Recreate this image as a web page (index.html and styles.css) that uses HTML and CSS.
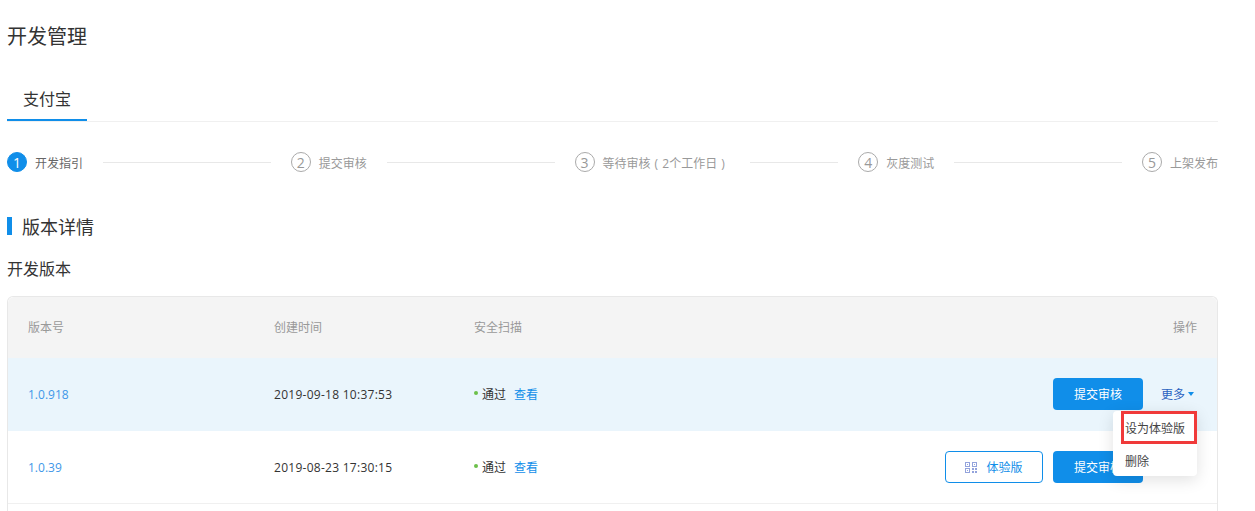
FILE: index.html
```html
<!DOCTYPE html>
<html lang="zh-CN">
<head>
    <meta charset="UTF-8">
    <meta name="viewport" content="width=device-width, initial-scale=1.0">
    <title>开发管理</title>
    <link rel="stylesheet" href="styles.css">
</head>
<body>
    <div class="container">
        <h1 class="page-title">开发管理</h1>

        <div class="tabs">
            <div class="tab active">支付宝</div>
        </div>

        <div class="steps">
            <div class="step current">
                <span class="step-num">1</span>
                <span class="step-text">开发指引</span>
                <span class="step-line"></span>
            </div>
            <div class="step">
                <span class="step-num">2</span>
                <span class="step-text">提交审核</span>
                <span class="step-line"></span>
            </div>
            <div class="step">
                <span class="step-num">3</span>
                <span class="step-text wide">等待审核 ( 2个工作日 )</span>
                <span class="step-line"></span>
            </div>
            <div class="step">
                <span class="step-num">4</span>
                <span class="step-text">灰度测试</span>
                <span class="step-line"></span>
            </div>
            <div class="step last">
                <span class="step-num">5</span>
                <span class="step-text">上架发布</span>
            </div>
        </div>

        <h2 class="section-title">版本详情</h2>
        <h3 class="sub-title">开发版本</h3>

        <div class="table">
            <div class="row head">
                <div class="col-version">版本号</div>
                <div class="col-time">创建时间</div>
                <div class="col-scan">安全扫描</div>
                <div class="col-action">操作</div>
            </div>

            <div class="row highlight">
                <div class="col-version"><a class="link">1.0.918</a></div>
                <div class="col-time"><span class="date">2019-09-18 10:37:53</span></div>
                <div class="col-scan"><span class="dot"></span><span class="pass">通过</span><a class="link-strong">查看</a></div>
                <div class="col-action">
                    <button class="btn primary">提交审核</button>
                    <div class="more">
                        <a class="more-link">更多<span class="caret"></span></a>
                        <div class="menu">
                            <div class="menu-item marked">设为体验版</div>
                            <div class="menu-item">删除</div>
                        </div>
                    </div>
                </div>
            </div>

            <div class="row">
                <div class="col-version"><a class="link">1.0.39</a></div>
                <div class="col-time"><span class="date">2019-08-23 17:30:15</span></div>
                <div class="col-scan"><span class="dot"></span><span class="pass">通过</span><a class="link-strong">查看</a></div>
                <div class="col-action">
                    <button class="btn outline">
                        <svg class="qr" width="12" height="11" viewBox="0 0 12 11"><path fill="#93a3dc" fill-rule="evenodd" d="M0 0h5v5H0zM1 1v3h3V1zM7 0h5v5H7zM8 1v3h3V1zM2 2h1v1H2zM9 2h1v1H9zM0 6h5v5H0zM1 7v3h3V7zM2 8h1v1H2zM7 6h2v2H7zM10 6h2v2h-2zM7 9h2v2H7zM10 9h2v2h-2z"/></svg>
                        体验版
                    </button>
                    <button class="btn primary">提交审核</button>
                    <div class="more-spacer"></div>
                </div>
            </div>

            <div class="row stub"></div>
        </div>
    </div>
</body>
</html>
```

FILE: styles.css
```css
:root {
    --primary-color: #108ee9;
    --text-color: #333333;
    --muted-color: #999999;
    --line-color: #e8e8e8;
}
html, body {
    margin: 0;
    height: 511px;
    overflow: hidden;
    background: #ffffff;
}
body {
    font-family: "Open Sans", "Noto Sans CJK SC", sans-serif;
    font-size: 12px;
    color: var(--text-color);
}
.container {
    width: 1211px;
    margin-left: 7px;
}
.page-title {
    margin: 0;
    padding-top: 23px;
    height: 57px;
    line-height: 28px;
    font-size: 20px;
    font-weight: normal;
    box-sizing: content-box;
}
.tabs {
    display: flex;
    height: 41px;
    border-bottom: 1px solid #f0f0f0;
}
.tab {
    width: 80px;
    height: 41px;
    box-sizing: border-box;
    text-align: center;
    font-size: 16px;
    line-height: 38px;
}
.tab.active {
    border-bottom: 2px solid var(--primary-color);
}

/* steps */
.steps {
    display: flex;
    align-items: center;
    margin-top: 30px;
    height: 20px;
}
.step {
    flex: 1;
    display: flex;
    align-items: center;
    padding-right: 20px;
}
.step.last {
    flex: none;
    padding-right: 0;
}
.step-num {
    width: 20px;
    height: 20px;
    box-sizing: border-box;
    border: 1px solid #aaaaaa;
    border-radius: 50%;
    color: var(--muted-color);
    font-size: 14px;
    line-height: 19px;
    text-align: center;
    margin-right: 8px;
}
.step-text {
    padding-top: 1px;
    color: var(--muted-color);
    white-space: nowrap;
}
.step-text.wide {
    word-spacing: 1px;
    margin-right: 5px;
}
.step-line {
    flex: 1;
    height: 1px;
    margin-left: 20px;
    background: var(--line-color);
}
.step.current .step-num {
    border-color: var(--primary-color);
    background: var(--primary-color);
    color: #ffffff;
}
.step.current .step-text {
    color: #666666;
}

.section-title {
    margin: 45px 0 0;
    height: 18px;
    line-height: 20px;
    padding-left: 10px;
    border-left: 5px solid var(--primary-color);
    font-size: 18px;
    font-weight: normal;
}
.sub-title {
    margin: 22px 0 0;
    height: 24px;
    line-height: 24px;
    font-size: 16px;
    font-weight: normal;
}

/* table */
.table {
    margin-top: 15px;
    border: 1px solid var(--line-color);
    border-radius: 6px 6px 0 0;
    border-bottom: none;
}
.row {
    display: flex;
    align-items: center;
    box-sizing: border-box;
    height: 73px;
    padding: 0 20px;
    border-bottom: 1px solid #f0f0f0;
}
.row.head {
    height: 61px;
    padding-bottom: 2px;
    background: #f4f4f4;
    color: var(--muted-color);
    border-bottom: none;
    border-radius: 6px 6px 0 0;
}
.row.highlight {
    height: 73px;
    padding-bottom: 1px;
    background: #eaf5fc;
    border-bottom: none;
}
.row.stub {
    height: 7px;
    border-bottom: none;
}
.col-version { width: 246px; }
.col-time { width: 200px; }
.col-scan { width: 200px; display: flex; align-items: center; }
.col-action {
    flex: 1;
    display: flex;
    justify-content: flex-end;
    align-items: center;
}
.date { letter-spacing: 0.27px; }
.link { color: #3f97e8; }
.link-strong { color: var(--primary-color); margin-left: 8px; }
.pass { color: #333333; }
.dot {
    width: 4px;
    height: 4px;
    margin-right: 4px;
    border-radius: 50%;
    background: #6cc04a;
    margin-top: -3px;
}

.btn {
    height: 32px;
    font-family: inherit;
    font-size: 12px;
    border-radius: 4px;
    padding: 0;
    cursor: pointer;
}
.btn.primary {
    width: 90px;
    border: none;
    background: var(--primary-color);
    color: #ffffff;
}
.btn.outline {
    width: 98px;
    margin-right: 10px;
    border: 1px solid var(--primary-color);
    background: #ffffff;
    color: var(--primary-color);
    display: flex;
    align-items: center;
    justify-content: center;
    gap: 9px;
}
.more {
    position: relative;
    width: 54px;
    box-sizing: border-box;
    padding-left: 18px;
}
.more-spacer { width: 54px; }
.more-link {
    color: #2a62c0;
    display: flex;
    align-items: center;
}
.caret {
    margin-left: 3px;
    border-left: 3.5px solid transparent;
    border-right: 3.5px solid transparent;
    border-top: 4px solid var(--primary-color);
}
.menu {
    position: absolute;
    top: 26px;
    right: 0;
    width: 84px;
    height: 65px;
    background: #ffffff;
    border-radius: 4px;
    box-shadow: 0 4px 16px rgba(0, 0, 0, 0.12);
    z-index: 2;
}
.menu-item {
    height: 33px;
    line-height: 35px;
    padding-left: 12px;
    box-sizing: border-box;
    color: #444444;
}
.menu-item.marked {
    margin-left: 8px;
    padding-left: 1px;
    line-height: 30px;
    border: 3px solid #f03a3a;
}
```
